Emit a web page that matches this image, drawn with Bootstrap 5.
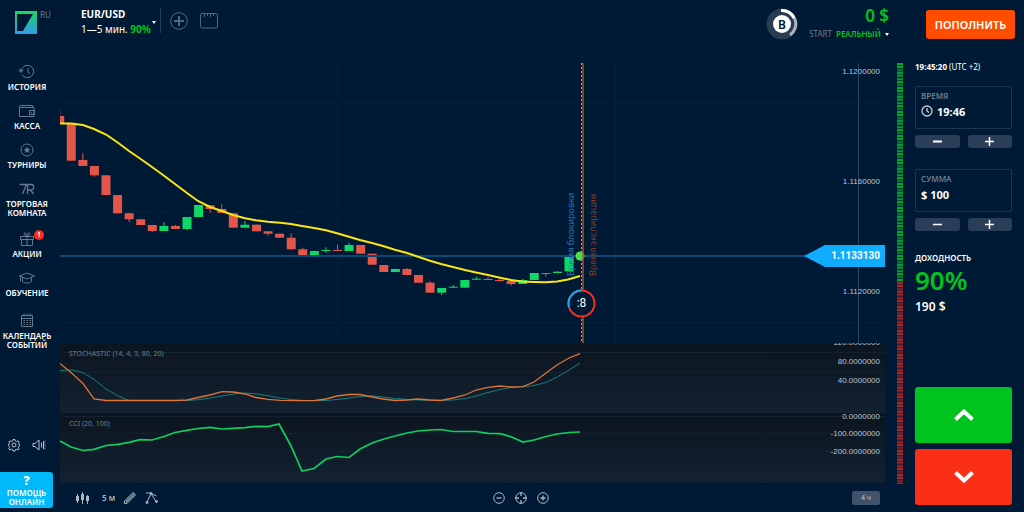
<!DOCTYPE html>
<html lang="ru">
<head>
<meta charset="utf-8">
<meta name="viewport" content="width=device-width, initial-scale=1">
<title>EUR/USD</title>
<link href="https://cdn.jsdelivr.net/npm/bootstrap@5.3.0/dist/css/bootstrap.min.css" rel="stylesheet">
<style>
:root{--bg:#001a35;--up:#00c31e;--down:#fb2f15;--muted:#6c7b8b;--tile:#2a3f57}
body{background:var(--bg);color:#fff;font-family:"Noto Sans","Open Sans",sans-serif;font-size:10px;line-height:14px}
button{border:0;background:none;color:inherit;padding:0}
svg{display:block}
a{color:inherit;text-decoration:none}
.topbar{height:62px}
.brand-box{width:81px;padding-left:15px;padding-top:11px}
.lang{font-size:8px;line-height:8px;color:var(--muted);margin-left:3px}
.asset{padding-top:7px;line-height:15px;text-align:left;gap:1px}
.asset .pair{font-size:10px}
.green{color:var(--up)}
.caret{border:2px solid transparent;border-top:3px solid #fff;border-bottom:0;width:4px}
.vline{width:1px;height:25px;background:#263d55;margin-top:8px}
.tool{color:#53677c;margin-top:12px}
.level{margin-top:8px}
.balance{width:80px;padding-top:6px;margin-left:11px;text-align:right}
.balance .sum{font-size:17px;line-height:20px;font-weight:600}
.balance button{font-size:8px;line-height:10px;color:var(--muted)}
.deposit{background:#ff4d00;border-radius:3px;width:89px;height:29px;margin:10px 9px 0 37px;font-size:11px;font-weight:600}
.side{width:54px;margin-right:6px;padding-top:2px}
.side ul{gap:12px}
.side li a{font-size:8px;line-height:9px;font-weight:600;text-align:center}
.side li svg{color:#66788a;margin-bottom:2px}
.side .two-line{margin-bottom:2px}
.count{position:absolute;left:34px;top:-1px;width:10px;height:10px;border-radius:5px;background:var(--down);font-size:7px;line-height:10px}
.quick{padding:0 8px 20px;color:#b9c3cd}
.help{background:#00b9f8;border-radius:0 3px 3px 0;width:53px;height:36px;margin-bottom:4px;font-size:8px;line-height:9px;font-weight:600}
.help b{font-size:12px;line-height:14px}
.charts svg{width:100%;height:auto}
.charts text{font-family:"Liberation Sans",Arial,sans-serif;font-size:8px;fill:#bcc5ce}
.charts .axis{text-anchor:end}
.charts .cap{font-family:"Noto Sans",sans-serif;font-size:7px;fill:#76808b}
.charts .price{font-family:Roboto,sans-serif;font-size:10px;font-weight:700;fill:#fff}
.charts .vert{font-family:"Noto Sans",sans-serif;font-size:9px}
.charts .timer{font-family:Roboto,sans-serif;font-size:12px;fill:#fff;text-anchor:middle}
.pane{background:linear-gradient(#0b151f,#132131)}
.charts .cci{overflow:visible}
.bottombar{height:29px;color:#aab7c2;font-size:8px}
.bottombar .zoomers{margin-left:80px}
.bottombar .frame{width:28px;height:14px;border-radius:2px;background:#40536a;color:#c5cdd5;font-size:7px;line-height:14px;margin-right:5px}
.mood{width:6px;margin:1px 12px 28px}
.mood div{background:repeating-linear-gradient(#001a3500 0 5px,#001a3555 5px 8px),repeating-linear-gradient(var(--c) 0 2px,var(--d) 2px 3px)}
.bulls{--c:#05a329;--d:#04562b;height:219px}
.bears{--c:#a52827;--d:#571f2c}
.trade{width:97px;margin-right:12px;padding-bottom:7px}
.clock{font-size:8px;line-height:10px;margin-bottom:14px}
.field{border:1px solid #1d354e;border-radius:2px;height:43px;padding:3px 5px}
.field label{font-size:8px;line-height:12px;color:var(--muted);font-weight:600}
.field input{border:0;background:none;color:#fff;font-size:11px;font-weight:700;line-height:16px;height:18px;padding:0;min-width:0;width:100%;outline:0}
.steps{margin:6px 0 21px}
.step{background:var(--tile);border-radius:3px;height:13px;flex:1 1 0}
.yield-label{font-size:8px;line-height:12px;font-weight:600}
.yield{font-size:26px;line-height:32px;font-weight:600}
.payout{font-size:12px;line-height:22px;font-weight:600}
.deal{height:56px;border-radius:3px}
</style>
</head>
<body class="d-flex flex-column min-vh-100">
<header class="topbar d-flex align-items-start">
  <a href="#" class="brand-box d-flex align-items-start">
    <svg width="22" height="23" viewBox="0 0 22 23"><defs><linearGradient id="lg" x2="0" y2="1"><stop stop-color="#17d85a"/><stop offset="1" stop-color="#3599ee"/></linearGradient></defs><path fill="url(#lg)" fill-rule="evenodd" d="M0 0h22v23H0zM2 3v17h6L18 3z"/></svg>
    <span class="lang">RU</span>
  </a>
  <button class="asset d-flex align-items-center">
    <span><span class="pair fw-bold d-block">EUR/USD</span><span>1—5 мин. <b class="green">90%</b></span></span>
    <span class="caret"></span>
  </button>
  <span class="vline ms-1"></span>
  <button class="tool ms-2" aria-label="Добавить"><svg width="20" height="18" viewBox="0 0 20 18" fill="none" stroke="currentColor"><circle cx="10" cy="9" r="8.3"/><path stroke-width="2" d="M10 4v10M5 9h10"/></svg></button>
  <button class="tool ms-2" aria-label="Окна"><svg width="22" height="18" viewBox="0 0 22 18" fill="none" stroke="currentColor"><rect x="3.500" y="1.500" width="17" height="14.500" rx="1.500"/><path d="M7.500 2v3M10.500 2v2M13.500 2v3M16.500 2v2"/></svg></button>
  <div class="level ms-auto"><svg width="32" height="32" viewBox="0 0 32 32"><circle cx="16" cy="16" r="15.500" fill="#2a3c54"/><path d="M15 2.500A13.500 13.500 0 0 1 24 27" fill="none" stroke="#aab4c0" stroke-width="3"/><path d="M15 2.500A13.500 13.500 0 0 1 28 10" fill="none" stroke="#fff" stroke-width="3"/><circle cx="16" cy="16" r="9" fill="#fff"/><text x="16" y="20.500" text-anchor="middle" font-size="12" font-weight="600" fill="#001a35">B</text></svg></div>
  <div class="balance text-nowrap">
    <div class="sum green">0 $</div>
    <button class="d-inline-flex align-items-center gap-1">START <b class="green fw-semibold">РЕАЛЬНЫЙ</b><span class="caret"></span></button>
  </div>
  <button class="deposit">ПОПОЛНИТЬ</button>
</header>

<div class="d-flex flex-grow-1">
  <nav class="side d-flex flex-column flex-shrink-0">
    <ul class="list-unstyled d-flex flex-column mb-0">
      <li><a href="#" class="d-flex flex-column align-items-center"><svg width="18" height="16" viewBox="0 0 18 16" fill="none" stroke="currentColor"><path d="M4 4.500a6.200 6.200 0 1 1 0 6M3 8V4.500M1 6l2 2.500 2-2.500zM10 4v4l2 2"/></svg>ИСТОРИЯ</a></li>
      <li><a href="#" class="d-flex flex-column align-items-center"><svg width="18" height="16" viewBox="0 0 18 16" fill="none" stroke="currentColor"><path d="M14.500 5V2.500h-12a1 1 0 0 0 0 2h13.500v9H1.500v-10M16.500 7.500h-5v4h5z"/><path d="M13 9.500h1"/></svg>КАССА</a></li>
      <li><a href="#" class="d-flex flex-column align-items-center"><svg width="18" height="16" viewBox="0 0 18 16" fill="none" stroke="currentColor"><circle cx="9" cy="8" r="6"/><path fill="currentColor" stroke="none" d="m9 4.500 1 2.300 2.500.2-1.900 1.600.6 2.400L9 9.700 6.800 11l.6-2.400L5.500 7l2.500-.2z"/></svg>ТУРНИРЫ</a></li>
      <li class="two-line"><a href="#" class="d-flex flex-column align-items-center"><svg width="18" height="16" viewBox="0 0 18 16" fill="none" stroke="currentColor" stroke-width="1.300"><path d="M1.500 3.500h7l-4 9.500M9.500 13V3.500h3.500a2.500 2.500 0 0 1 0 5.500H9.500m3 0 3 4"/></svg>ТОРГОВАЯ<br>КОМНАТА</a></li>
      <li class="position-relative"><a href="#" class="d-flex flex-column align-items-center"><svg width="18" height="16" viewBox="0 0 18 16" fill="none" stroke="currentColor"><path d="M2.500 5.500h13v3h-13zM3.500 8.500v6h11v-6M9 5.500v9M9 5C6 5 5 2 7 2s2 3 2 3 0-3 2-3 1 3-2 3"/></svg>АКЦИИ<span class="count">1</span></a></li>
      <li><a href="#" class="d-flex flex-column align-items-center"><svg width="18" height="16" viewBox="0 0 18 16" fill="none" stroke="currentColor"><path d="M1.500 6 9 3l7.500 3L9 9zM4.500 7.500v4c2.500 2 6.500 2 9 0v-4M2.500 6.500v5"/></svg>ОБУЧЕНИЕ</a></li>
      <li class="two-line pt-1"><a href="#" class="d-flex flex-column align-items-center"><svg width="18" height="16" viewBox="0 0 18 16" fill="none" stroke="currentColor"><path d="M3.500 2.500h11v11h-11zM3.500 5.500h11M6 .5v3M12 .5v3M9 .5v2"/><path stroke-dasharray="1.500 1.500" d="M5.500 7.500h8M5.500 9.500h8M5.500 11.500h8"/></svg>КАЛЕНДАРЬ<br>СОБЫТИЙ</a></li>
    </ul>
    <div class="quick d-flex justify-content-between mt-auto">
      <button aria-label="Настройки"><svg width="12" height="14" viewBox="0 0 12 14" fill="none" stroke="currentColor"><circle cx="6" cy="7" r="2"/><path d="m5 1.500h2l.4 1.500 1.200.5L10 2.800 11.300 4l-.8 1.400.4 1h.6v1.500l-.7.400-.5 1 .8 1.400L10 12l-1.400-.8-1.200.5-.4 1.300H5l-.4-1.300-1.200-.5L2 12 .8 10.700l.8-1.400-.5-1L.500 7.800V6.400l.700-.1.400-1L.800 4 2 2.800l1.400.7L4.600 3z"/></svg></button>
      <button aria-label="Звук"><svg width="14" height="14" viewBox="0 0 14 14" fill="none" stroke="currentColor"><path d="M1 5.500h2l4-3.500v10L3 8.500H1zM9.500 4.500v5M11.500 3v8"/><path d="M13 2v10" opacity=".4"/></svg></button>
    </div>
    <button class="help d-flex flex-column align-items-center justify-content-center"><b>?</b><span>ПОМОЩЬ<br>ОНЛАЙН</span></button>
  </nav>

  <main class="flex-grow-1 d-flex flex-column" style="min-width:0">
    <div class="charts">
      <svg viewBox="60 62 825 281">
        <path stroke="#05203b" d="M60 102.500h825M60 212.500h825M60 322.500h825M337.500 62v281M615.500 62v281"/>
        <path stroke="#2b4460" d="M858.500 63v280"/>
        <text class="axis" x="880" y="74">1.1200000</text><text class="axis" x="880" y="184">1.1160000</text><text class="axis" x="880" y="294">1.1120000</text>
        <g id="candles"></g>
        <path stroke="#074a76" stroke-width="2" d="M60 256h750"/>
        <path id="ma" fill="none" stroke="#fbe512" stroke-width="2"/>
        <circle cx="580" cy="256" r="4.500" fill="#4be04b"/>
        <path stroke="#a9502c" stroke-width="1.500" d="M583 63v280"/>
        <path stroke="#6fb0dd" stroke-dasharray="2 2" d="M581.500 63v280"/>
        <text class="vert" transform="translate(574 276) rotate(-90)" style="fill:#2275ae">Время блокировки</text>
        <text class="vert" transform="translate(596 276) rotate(-90)" style="fill:#853a26">Время экспирации</text>
        <circle cx="581.500" cy="303.500" r="13" fill="#001a35" stroke="#fb2f15" stroke-width="2"/>
        <path d="M581.500 290.500A13 13 0 0 0 569 307" fill="none" stroke="#10a9f5" stroke-width="2"/>
        <text class="timer" x="581.500" y="307">:8</text>
        <path fill="#10adff" d="M804 256l21-11h60v22h-60z"/>
        <text class="axis price" x="880" y="259">1.1133130</text>
      </svg>
      <svg class="pane" viewBox="60 343 825 70">
        <path stroke="#15212e" d="M60 352.500h825M60 372.500h825M60 392.500h825"/>
        <text class="cap" x="69" y="356">STOCHASTIC (14, 4, 3, 80, 20)</text>
        <path id="slow" fill="none" stroke="#147f80"/>
        <path id="fast" fill="none" stroke="#dd7334" stroke-width="1.300"/>
        <text class="axis" x="880" y="345">120.0000000</text><text class="axis" x="880" y="364">80.0000000</text><text class="axis" x="880" y="383">40.0000000</text>
      </svg>
      <svg class="pane cci" viewBox="60 413 825 70">
        <path stroke="#15212e" d="M60 416.500h825M60 433.500h825M60 451.500h825M60 469.500h825"/>
        <text class="cap" x="69" y="426">CCI (20, 100)</text>
        <path id="cci" fill="none" stroke="#0dd061" stroke-width="1.700"/>
        <text class="axis" x="880" y="419">0.0000000</text><text class="axis" x="880" y="436">-100.0000000</text><text class="axis" x="880" y="454">-200.0000000</text>
      </svg>
    </div>
    <div class="bottombar row g-0 align-items-center mt-auto">
      <div class="col d-flex align-items-center gap-2 ps-3">
        <button aria-label="Тип графика"><svg width="14" height="14" viewBox="0 0 14 14" fill="currentColor"><path d="M0 5h3v5H0zM1 3h1v9H1zM5 3h3v6H5zM6 1h1v12H6zM10 5h3v5h-3zM11 4h1v9h-1z"/></svg></button>
        <button class="fw-semibold ms-1">5 м</button>
        <button aria-label="Рисование"><svg width="14" height="14" viewBox="0 0 14 14" fill="none" stroke="currentColor"><path d="M1.500 10 10 1.500 12.500 4 4 12.500l-2.500.2zM3 11 11.500 3"/><path d="m2.500 10 8.500-8M3 12l8.500-8" opacity=".6"/></svg></button>
        <button aria-label="Индикаторы"><svg width="14" height="14" viewBox="0 0 14 14" fill="none" stroke="currentColor"><path d="M2 11 6 2.500l5 8M7 3l4.500 2M1 2h4"/><circle cx="2" cy="11.500" r="1" fill="currentColor"/><circle cx="6" cy="2.500" r="1" fill="currentColor"/><circle cx="11.500" cy="10.500" r="1" fill="currentColor"/></svg></button>
      </div>
      <div class="zoomers col-auto d-flex gap-2">
        <button aria-label="Уменьшить"><svg width="14" height="14" viewBox="0 0 14 14" fill="none" stroke="currentColor"><circle cx="7" cy="7" r="5.300"/><path d="M4.500 7h5" stroke-width="1.300"/></svg></button>
        <button aria-label="По центру"><svg width="14" height="14" viewBox="0 0 14 14" fill="none" stroke="currentColor"><circle cx="7" cy="7" r="5.300"/><path d="M7 1v4M7 9v4M1 7h4M9 7h4" stroke-width="1.300"/></svg></button>
        <button aria-label="Увеличить"><svg width="14" height="14" viewBox="0 0 14 14" fill="none" stroke="currentColor"><circle cx="7" cy="7" r="5.300"/><path d="M4.500 7h5M7 4.500v5" stroke-width="1.300"/></svg></button>
      </div>
      <div class="col d-flex justify-content-end"><button class="frame">4 ч</button></div>
    </div>
  </main>

  <div class="mood d-flex flex-column flex-shrink-0"><div class="bulls"></div><div class="bears flex-grow-1"></div></div>

  <aside class="trade d-flex flex-column flex-shrink-0">
    <div class="clock text-nowrap"><b>19:45:20</b> <span>(UTC +2)</span></div>
    <div class="field d-flex flex-column">
      <label for="time">ВРЕМЯ</label>
      <div class="d-flex align-items-center"><svg class="flex-shrink-0 me-1" width="12" height="12" viewBox="0 0 12 12" fill="none" stroke="#c3ccd5" stroke-width="1.300"><circle cx="6" cy="6" r="5"/><path d="M6 3v3l2 1.500"/></svg><input id="time" value="19:46"></div>
    </div>
    <div class="steps d-flex gap-2">
      <button class="step" aria-label="Раньше"><svg class="mx-auto" width="9" height="9" stroke="#fff" stroke-width="2"><path d="M0 4.500h9"/></svg></button>
      <button class="step" aria-label="Позже"><svg class="mx-auto" width="9" height="9" stroke="#fff" stroke-width="1.500"><path d="M0 4.500h9M4.500 0v9"/></svg></button>
    </div>
    <div class="field d-flex flex-column">
      <label for="sum">СУММА</label>
      <input id="sum" value="$ 100">
    </div>
    <div class="steps d-flex gap-2">
      <button class="step" aria-label="Меньше"><svg class="mx-auto" width="9" height="9" stroke="#fff" stroke-width="1.500"><path d="M0 4.500h9"/></svg></button>
      <button class="step" aria-label="Больше"><svg class="mx-auto" width="9" height="9" stroke="#fff" stroke-width="1.500"><path d="M0 4.500h9M4.500 0v9"/></svg></button>
    </div>
    <div class="yield-label">ДОХОДНОСТЬ</div>
    <div class="yield green">90%</div>
    <div class="payout">190 $</div>
    <button class="deal mt-auto" style="background:var(--up)" aria-label="Вверх"><svg class="mx-auto" width="20" height="12" viewBox="0 0 20 12" fill="none" stroke="#fff" stroke-width="4"><path d="m1.500 10.500 8.500-8 8.500 8"/></svg></button>
    <button class="deal" style="background:var(--down);margin-top:6px" aria-label="Вниз"><svg class="mx-auto" width="20" height="12" viewBox="0 0 20 12" fill="none" stroke="#fff" stroke-width="4"><path d="m1.500 1.500 8.500 8 8.500-8"/></svg></button>
  </aside>
</div>
<script src="https://cdn.jsdelivr.net/npm/bootstrap@5.3.0/dist/js/bootstrap.bundle.min.js"></script>
<script>
// direction, body top, body bottom, wick top, wick bottom
const bars=[["r",116,124,109],["r",123.300,160.700],["r",160,166,153.300],["r",166,175.300,166,176.700],["r",175.300,195],["r",195,213.300],["r",213.300,219.300,213,222],["r",219.300,225],["r",225,231,225,232],["g",226,231,222.300],["r",226,229,225],["g",217,229,217,230],["g",205,217],["r",205.300,209,205,212.700],["r",209,213,204.300],["r",213.300,227.700],["g",224.700,227.700,221],["r",224.700,231.300],["r",231.300,233.700,231,235.700],["r",233.700,237.700],["r",237.700,249.300,233.300],["r",249.300,257,247.700],["g",251,257],["g",250,251,247.300,252.700],["r",250,251,244.700],["g",245,251,242.700],["r",245,253.700],["r",253.700,264.700],["r",265,272],["g",269,272],["r",269,275,268],["r",275,282.700],["r",282.700,292.700,281],["g",288,292.700,288,295],["g",286.700,287.700,285],["g",280,287.700],["g",278.700,279.700,276.700],["r",279,280,277],["r",280,281,279,282],["r",281,284,281,285.700],["g",280,284,279],["g",273,280],["r",273,274,273,276.700],["g",271.700,273,271],["g",255,271.300]];
document.getElementById("candles").innerHTML=bars.map((b,i)=>{
  const x=59.700+i*11.575,c=b[0]==="r"?"#e4564a":"#10d867",hi=b[3]||b[1],lo=b[4]||b[2];
  return `<path fill="${c}" d="M${x-4.500} ${b[1]}h9V${b[2]}h-9z"/><path stroke="${c}" d="M${x} ${hi}V${lo}"/>`;
}).join("");
const draw=(id,pts)=>document.getElementById(id).setAttribute("d","M"+pts);
draw("ma","60 123.500 71 123.500 83 125 94 129 106 134.500 117 142 129 151 140 158.500 152 167 163 175 175 184 187 193 198 201 210 207 222 211 233 215 245 218.300 256 220.300 268 221.700 280 222.700 291 224 302 226 314 228 326 230.300 337 233.300 349 236.700 360 240 372 243 383 246 395 249.700 407 253 418 256.700 430 260.700 441 264 453 267 465 270 476 272.500 488 275 500 277.700 511 280 522 281.500 534 282 545 282.300 557 281.500 568 279.500 580 276");
draw("fast","60 363.500 71 372.500 83 383.500 94 399 106 400.500 175 400.500 187 400 198 397.500 210 395 222 391.700 233 392 245 394 256 397.500 268 399.300 280 400.300 302 400.700 315 400.500 326 399 337 396 349 394.500 360 394.500 372 397 383 399 395 400.500 407 400 418 399 430 400 441 400.500 453 398 465 395 476 390 488 387.300 500 386 511 387 523 386.700 534 382 546 373 557 365 569 358 580 353.700");
draw("slow","60 370.500 72 370 83 372.500 95 380 106 389 118 396 129 400.500 187 400.500 198 399.700 210 398 222 396 233 394 245 393 257 394 268 395.700 280 398 291 399.500 303 400.500 326 400.500 337 399.500 349 398 360 396.500 372 395.700 383 397 395 398.500 418 400 441 400.500 453 400 465 398.500 476 396 488 392.500 500 389.500 511 387.500 523 386.700 534 385.500 546 382.500 557 377 569 370 580 363");
draw("cci","60 441 71 447 83 450.500 94 449.300 106 445.500 118 444.300 129 442.300 140 439.700 152 440 164 436.500 175 432.500 187 430.300 198 428.500 210 427.300 222 429 233 428.300 245 427.700 256 426.300 268 426.700 279 424 291 446 302 471 314 468.500 326 459 337 456.500 349 457.500 360 449 372 443 384 439 395 436 407 433 418 431 430 430 441 429.500 453 431.500 476 431.500 488 433.300 500 433.700 511 436.700 523 442 534 440 546 436.500 557 434 569 432.500 580 432");
</script>
</body>
</html>
